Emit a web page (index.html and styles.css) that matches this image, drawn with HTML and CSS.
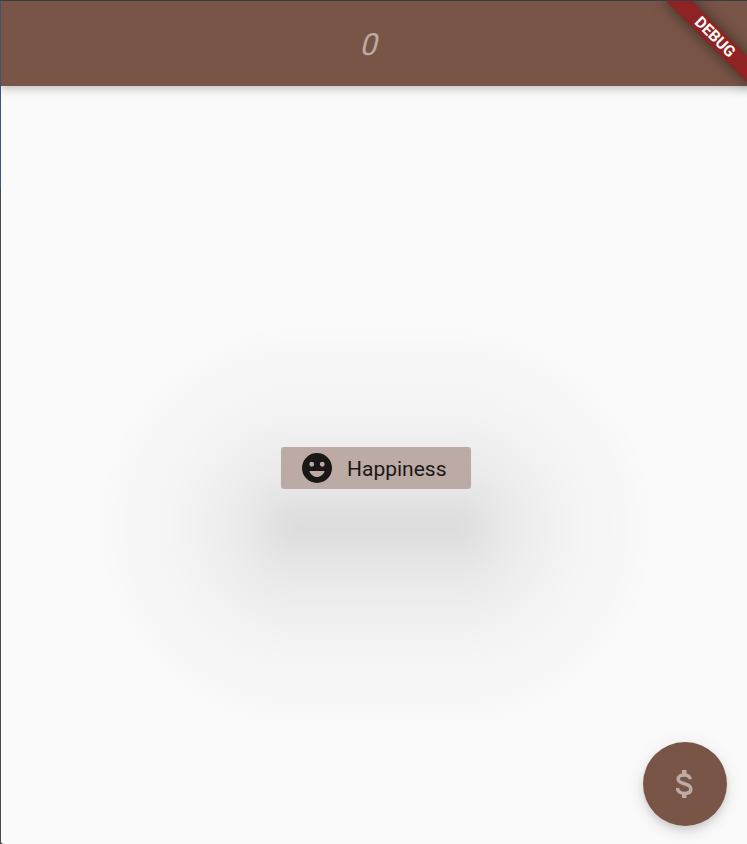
FILE: index.html
```html
<!DOCTYPE html>
<html lang="en">
<head>
<meta charset="utf-8">
<title>Happiness</title>
<link rel="stylesheet" href="styles.css">
</head>
<body>
<div class="window">
  <div class="app">
    <header class="bar"><span class="count">0</span></header>
    <main class="content">
      <div class="anchor">
        <div class="glow"><i class="glow-left"></i><i class="glow-mid"></i><i class="glow-right"></i></div>
        <button class="mood">
          <svg class="face" viewBox="0 0 24 24" aria-hidden="true"><path fill="currentColor" fill-rule="evenodd" d="M12 2a10 10 0 1 0 0 20a10 10 0 1 0 0-20zM8.5 7.9a1.6 1.6 0 1 1 0 3.2a1.6 1.6 0 1 1 0-3.2zM15.5 7.9a1.6 1.6 0 1 1 0 3.2a1.6 1.6 0 1 1 0-3.2zM6.9 14h10.2c-.8 2.3-2.8 4-5.1 4s-4.3-1.7-5.1-4z"/></svg>
          <span>Happiness</span>
        </button>
      </div>
    </main>
    <button class="fab" aria-label="Money">
      <svg class="dollar" viewBox="0 0 24 24" aria-hidden="true"><g fill="none" stroke="currentColor" stroke-width="2.3"><path d="M15.4 8.9C15.4 7.2 13.9 6 11.6 6S7.4 7 7.4 8.7c0 1.8 1.6 2.5 4.2 3.1 2.8.7 4.3 1.6 4.3 3.5 0 1.9-1.6 3-4.2 3-2.9 0-4.6-1.3-4.7-3.6"/><path stroke-width="3" d="M11.5 2.7v3M11.5 18.1v3.2"/></g></svg>
    </button>
    <div class="ribbon">DEBUG</div>
  </div>
</div>
</body>
</html>
```
FILE: styles.css
```css
* { box-sizing: border-box; }
body { margin: 0; overflow: hidden; font-family: Roboto, sans-serif; }
.window {
  width: 747px;
  height: 844px;
  padding: 1px 0 0 1px;
  overflow: hidden;
  background: linear-gradient(#3a3c43, #3a3c43) 0 0 / 100% 1px no-repeat,
    linear-gradient(#3e5379 187px, #484848 188px);
}
.app {
  position: relative;
  display: flex;
  flex-direction: column;
  width: 750px;
  height: 843px;
  overflow: hidden;
  border-bottom-left-radius: 3px;
  background: #fafafa;
}
.bar {
  display: flex;
  flex: none;
  align-items: center;
  justify-content: center;
  height: 85px;
  padding-right: 10px;
  background: #795548;
  box-shadow: 0 3px 6px -1px rgba(0,0,0,.1), 0 6px 8px rgba(0,0,0,.08), 0 1px 12px rgba(0,0,0,.06);
  z-index: 1;
}
.count { font-size: 30.5px; color: #bcaaa4; line-height: 36px; padding-top: 3px; transform: skewX(-14deg); font-weight: 400; }
.content { flex: 1; display: flex; align-items: center; justify-content: center; padding-top: 6px; }
.anchor { position: relative; }
.glow {
  position: absolute;
  left: -186px;
  top: -125px;
  display: flex;
  width: 562px;
  height: 410px;
  --fade: rgba(0,0,0,.118) 0, rgba(0,0,0,.104) 8%, rgba(0,0,0,.087) 16%, rgba(0,0,0,.063) 29%, rgba(0,0,0,.048) 40%, rgba(0,0,0,.036) 50%, rgba(0,0,0,.02) 65%, rgba(0,0,0,.01) 84%, rgba(0,0,0,0) 100%;
}
.glow-left, .glow-right { width: 204px; }
.glow-left { background: radial-gradient(204px 205px at 100% 50%, var(--fade)); }
.glow-right { background: radial-gradient(204px 205px at 0 50%, var(--fade)); }
.glow-mid {
  flex: 1;
  background: linear-gradient(to top, var(--fade)) top / 100% 50% no-repeat,
    linear-gradient(to bottom, var(--fade)) bottom / 100% 50% no-repeat;
}
.mood {
  position: relative;
  display: flex;
  align-items: center;
  gap: 12px;
  width: 190px;
  height: 42px;
  padding: 0 0 0 18px;
  border: 0;
  border-radius: 3px;
  background: #bcaaa4;
  color: #1a1816;
  font: 400 21px/25px Roboto, sans-serif;
}
.mood span { padding-top: 2px; }
.face { width: 36px; height: 36px; flex: none; }
.fab {
  position: absolute;
  right: 24px;
  bottom: 18px;
  display: flex;
  align-items: center;
  justify-content: center;
  width: 84px;
  height: 84px;
  padding: 0;
  border: 0;
  border-radius: 50%;
  background: #795548;
  color: #bcaaa4;
  box-shadow: 0 4px 7px -1px rgba(0,0,0,.1), 0 7px 14px rgba(0,0,0,.08), 0 1px 20px rgba(0,0,0,.06);
}
.dollar { width: 36px; height: 36px; }
.ribbon {
  position: absolute;
  z-index: 2;
  top: 42px;
  right: -60px;
  width: 120px;
  height: 18px;
  transform: rotate(45deg);
  transform-origin: 60px -42px;
  background: #8f2222;
  box-shadow: 0 0 16px rgba(0,0,0,.5);
  color: #fff;
  font-size: 15.6px;
  font-weight: 700;
  line-height: 18px;
  text-align: center;
}
```
